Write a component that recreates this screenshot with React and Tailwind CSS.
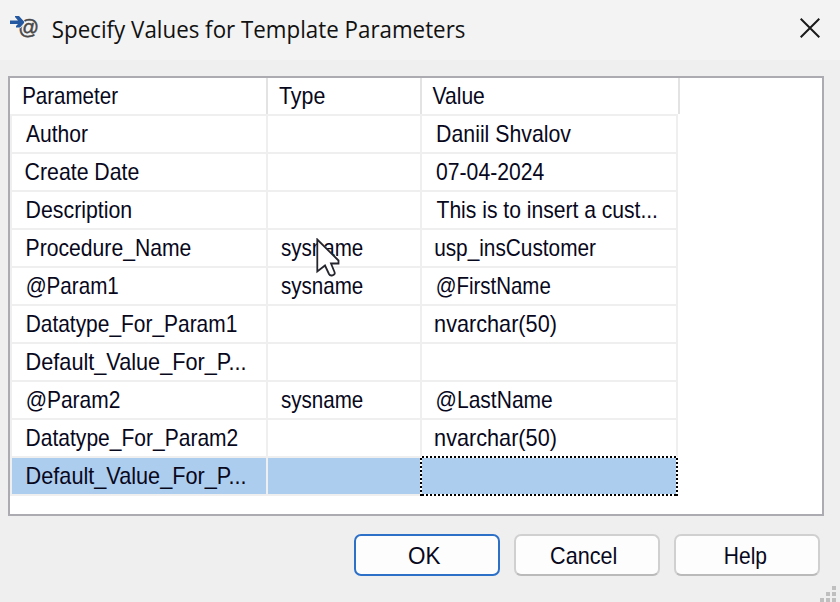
import React from "react";

const UI_FONT = '24px "Liberation Sans", sans-serif';
const TITLE_FONT = '24px "Open Sans", sans-serif';
const measureContext = document.createElement("canvas").getContext("2d");

// Condenses a label so its ink starts at `x` inside its parent and spans `w` pixels.
function Label({ text, x, w, title = false }) {
  measureContext.font = title ? TITLE_FONT : UI_FONT;
  const m = measureContext.measureText(text);
  const scale = w / (m.actualBoundingBoxLeft + m.actualBoundingBoxRight);
  const shift = x + m.actualBoundingBoxLeft * scale;
  return (
    <span
      className={
        title
          ? "block w-max origin-left whitespace-pre font-['Open_Sans',sans-serif] text-[24px] text-[#111]"
          : "block w-max origin-left whitespace-pre font-['Liberation_Sans',sans-serif] text-[24px] text-[#08081c]"
      }
      style={{ transform: `translateX(${shift}px) scaleX(${scale})` }}
    >
      {text}
    </span>
  );
}

const SYSNAME = ["sysname", 13, 82];

const rows = [
  [["Author", 14, 62], null, ["Daniil Shvalov", 15, 134]],
  [["Create Date", 13.5, 113.5], null, ["07-04-2024", 14, 108]],
  [["Description", 14.5, 104.5], null, ["This is to insert a cust...", 14.5, 220]],
  [["Procedure_Name", 14.5, 164.5], SYSNAME, ["usp_insCustomer", 13, 161]],
  [["@Param1", 14.5, 92], SYSNAME, ["@FirstName", 14.5, 114]],
  [["Datatype_For_Param1", 14.5, 210.5], null, ["nvarchar(50)", 13, 121]],
  [["Default_Value_For_P...", 14.5, 218.5], null, null],
  [["@Param2", 14.5, 93.5], SYSNAME, ["@LastName", 14.5, 116]],
  [["Datatype_For_Param2", 14.5, 211.5], null, ["nvarchar(50)", 13, 121]],
  [["Default_Value_For_P...", 14.5, 218.5], null, null],
];

function Cell({ cell, className }) {
  return (
    <div className={`h-[38px] shrink-0 overflow-hidden border-b-2 border-[#efefef] leading-[36px] ${className}`}>
      {cell && <Label text={cell[0]} x={cell[1]} w={cell[2]} />}
    </div>
  );
}

function Row({ cells, selected }) {
  const fill = selected ? "bg-[#adcdef] bg-clip-padding" : "";
  return (
    <div className="relative flex w-[668px]">
      <div className="h-[38px] w-0.5 bg-[#efefef]" />
      <Cell cell={cells[0]} className={`w-[256px] border-r-2 ${fill}`} />
      <Cell cell={cells[1]} className={`w-[154px] border-r-2 ${fill}`} />
      <Cell cell={cells[2]} className={`w-[256px] border-r-2 ${fill}`} />
      {selected && <FocusRect />}
    </div>
  );
}

function FocusRect() {
  return (
    <svg className="absolute -top-0.5 left-[410px]" width="258" height="40" shapeRendering="crispEdges">
      <path d="M1 1H257M1 39H257M1 1V39M257 1V39" stroke="#fff" strokeWidth="2" />
      <path d="M2 1H257M2 39H257" stroke="#000" strokeWidth="2" strokeDasharray="2 2" />
      <path d="M1 2V40M257 2V40" stroke="#000" strokeWidth="2" strokeDasharray="2 2" />
    </svg>
  );
}

function Button({ text, x, w, primary }) {
  return (
    <button
      className={`h-[42px] w-[146px] rounded-[7px] border-2 bg-[#fdfdfd] text-left leading-[40px] ${
        primary ? "border-[#2d70c8]" : "border-[#d0d0d0] border-b-[#bababa]"
      }`}
    >
      <Label text={text} x={x} w={w} />
    </button>
  );
}

function TemplateIcon() {
  return (
    <svg width="30" height="26" viewBox="0 0 30 26" fill="none">
      <text x="8.2" y="17.6" fontSize="21" fontFamily="Liberation Sans, sans-serif" fill="#484848" stroke="#484848" strokeWidth=".5" textLength="20.8" lengthAdjust="spacingAndGlyphs">@</text>
      <path d="M0 4.5H8L5 1V0H9L14 5.5V7L10 11.5H6V10L8 8H0Z" fill="#f3f3f3" stroke="#f3f3f3" strokeWidth="1.5" />
      <path d="M0 4.5H8L5 1V0H9L14 5.5V7L10 11.5H6V10L8 8H0Z" fill="#2458a0" />
    </svg>
  );
}

export default function App() {
  return (
    <div className="relative flex h-[602px] w-[840px] flex-col overflow-hidden bg-[#efefef]">
      <header className="flex h-[60px] shrink-0 bg-[#f3f3f3] pl-2.5">
        <div className="mt-4 w-[30px]"><TemplateIcon /></div>
        <h1 className="w-[760px] pl-3 leading-[58px]">
          <Label text="Specify Values for Template Parameters" x={0.7} w={412.3} title />
        </h1>
        <svg className="mt-[18px]" width="20" height="20" viewBox="0 0 20 20">
          <path d="M.7.7 19.3 19.3M19.3.7.7 19.3" stroke="#1a1a1a" strokeWidth="2" />
        </svg>
      </header>

      <main className="ml-2 mt-4 h-[440px] w-[816px] shrink-0 border-2 border-[#acabb1] bg-white">
        <div className="flex h-9 w-[670px] leading-[36px]">
          <div className="w-[258px] border-r-2 border-[#e3e3e3]"><Label text="Parameter" x={13} w={95} /></div>
          <div className="w-[154px] border-r-2 border-[#e3e3e3]"><Label text="Type" x={11} w={46} /></div>
          <div className="w-[258px] border-r-2 border-[#e3e3e3]"><Label text="Value" x={10.5} w={52} /></div>
        </div>
        <div className="h-0.5 w-[668px] bg-[#efefef]" />
        {rows.map((cells, i) => (
          <Row key={i} cells={cells} selected={i === rows.length - 1} />
        ))}
      </main>

      <footer className="mt-[18px] flex justify-end gap-3.5 pr-5">
        <Button text="OK" x={53} w={31.5} primary />
        <Button text="Cancel" x={35} w={65} />
        <Button text="Help" x={48.7} w={42} />
      </footer>

      <svg className="absolute left-[316px] top-[238px]" width="26" height="40" viewBox="0 0 26 40">
        <path d="M1.3 1.5V33.5L9 27.5 13 36Q14 38 16.5 37.3 19.5 36.5 18.5 34L15 25.5H22.5V22.5Z" fill="#fff" stroke="#25252d" strokeWidth="1.8" />
      </svg>

      <svg className="absolute bottom-0 right-0" width="20" height="18" fill="#bfbfbf" shapeRendering="crispEdges">
        <path d="M12 2h4v4h-4zM6 8h4v4H6zM12 8h4v4h-4zM0 14h4v4H0zM6 14h4v4H6zM12 14h4v4h-4z" />
      </svg>
    </div>
  );
}
